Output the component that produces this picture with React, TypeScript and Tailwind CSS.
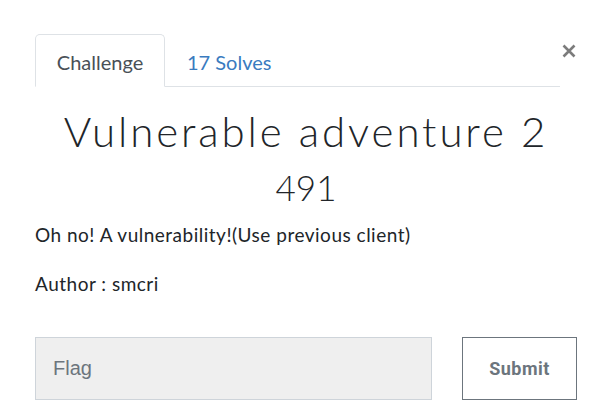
export default function App() {
  return (
    <div className="w-[615px] h-[412px] bg-white pl-[35px] pt-[34px] text-[#212529] font-['Lato',_'Liberation_Sans',_sans-serif]">
      {/* tabs + close */}
      <div className="flex items-start">
        <ul className="flex w-[525px] h-[53px] border-b border-[#dee2e6]">
          <li className="h-[53px] w-[130px] pt-[3px] flex items-center justify-center border border-b-white border-[#dee2e6] rounded-t-[5px] bg-white text-[20px] text-[#495057]">
            Challenge
          </li>
          <li className="h-[53px] pt-[3px] flex items-center px-[22px] text-[20px] text-[#3a7bbf]">
            17 Solves
          </li>
        </ul>
        <button className="ml-auto mr-[39px] mt-[10px] w-[14px] h-[14px] flex items-center justify-center">
          <svg width="14" height="14" viewBox="0 0 14 14">
            <path d="M1.5 1.5 L12.5 12.5 M12.5 1.5 L1.5 12.5" stroke="#7c7c7c" strokeWidth="2.6" strokeLinecap="butt" />
          </svg>
        </button>
      </div>

      <div className="pr-[38px]">
        <h2 className="mt-[20px] h-[48px] leading-[48px] text-center text-[42px] font-light tracking-[2.9px] text-[#212529]">
          Vulnerable adventure 2
        </h2>
        <h3 className="mt-[12px] h-[40px] leading-[40px] text-center text-[35px] font-light text-[#212529]">
          491
        </h3>
        <p className="mt-[16px] h-[24px] leading-[24px] text-[19px] tracking-[0.5px]">Oh no! A vulnerability!(Use previous client)</p>
        <p className="mt-[25px] h-[24px] leading-[24px] text-[19px] tracking-[0.5px]">Author : smcri</p>

        <form className="mt-[41px] flex gap-[30px]">
          <input
            placeholder="Flag"
            className="w-[397px] h-[63px] bg-[#efefef] border border-[#ced4da] px-[17px] text-[20px] font-['Liberation_Sans',_sans-serif] placeholder:text-[#6c757d] outline-none"
          />
          <button
            type="button"
            className="w-[115px] h-[63px] border border-[#6c757d] text-[#6c757d] text-[18px] font-bold font-['Roboto',_sans-serif] tracking-[0.5px]"
          >
            Submit
          </button>
        </form>
      </div>
    </div>
  );
}
